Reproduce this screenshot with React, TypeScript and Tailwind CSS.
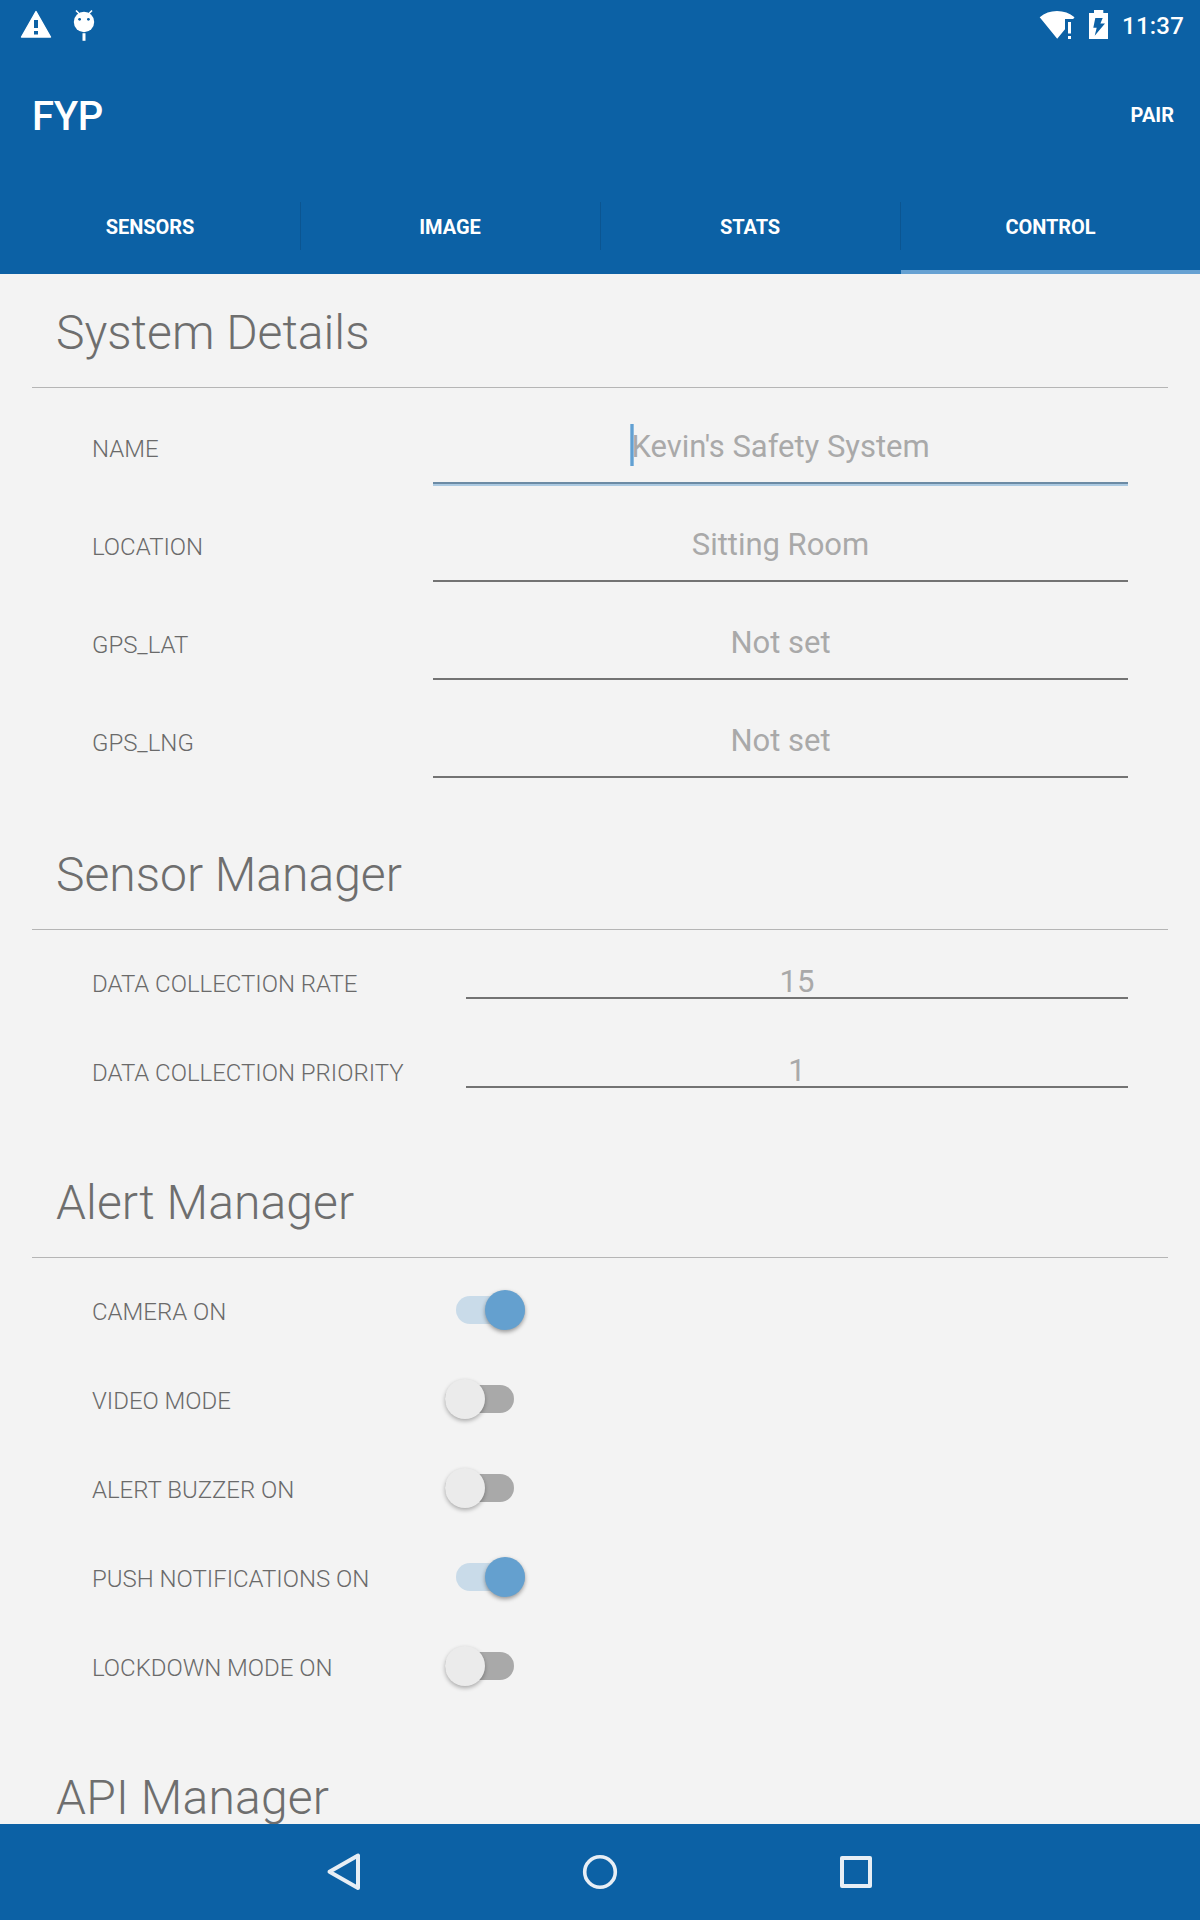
import React from "react";

function Title({ children, box }: { children: string; box: string }) {
  return (
    <div className={`mx-8 border-b border-[#b5b5b5] pl-6 ${box}`}>
      <h2 className="text-[48px] leading-[56px] font-light whitespace-nowrap text-[#6e6e6e]">{children}</h2>
    </div>
  );
}

function Label({ children }: { children: string }) {
  return <span className="block text-[24px] leading-7 font-light tracking-[-0.02px] whitespace-nowrap text-[#6a6a6a]">{children}</span>;
}

function Value({ children }: { children: string }) {
  return <span className="text-[31px] leading-9 tracking-[-0.03px] whitespace-nowrap text-[#a9a9a9]">{children}</span>;
}

function Field({ label, value, active }: { label: string; value: string; active?: boolean }) {
  return (
    <div className="flex h-[98px] items-start pl-[92px]">
      <div className="w-[341px] pt-[47px]"><Label>{label}</Label></div>
      <div className="w-[695px]">
        <div className="flex h-[94px] justify-center pt-[41px]">
          <div className="relative">
            <Value>{value}</Value>
            {active && <i className="absolute -top-[5px] -left-[1px] h-[42px] w-1 border-x border-[#8dbbdf] bg-[#62a0d2]" />}
          </div>
        </div>
        <div className={`h-[2px] ${active ? "bg-[#6b8aa4]" : "bg-[#737373]"}`} />
        {active && <div className="h-[2px] bg-[#abc9e1]" />}
      </div>
    </div>
  );
}

function Sensor({ label, value }: { label: string; value: string }) {
  return (
    <div className="flex h-[89px] items-start pl-[92px]">
      <div className="w-[374px] pt-[40px]"><Label>{label}</Label></div>
      <div className="flex h-[69px] w-[662px] justify-center border-b-2 border-[#737373] pt-[34px]"><Value>{value}</Value></div>
    </div>
  );
}

function Toggle({ label, on }: { label: string; on?: boolean }) {
  return (
    <div className="flex h-[89px] items-start pl-[92px]">
      <div className="w-[352px] pt-[40px]"><Label>{label}</Label></div>
      {on ? (
        <div className="mt-[38px] ml-3 flex h-7 w-[69px] items-center justify-end rounded-full bg-[#c9dbe9]">
          <div className="h-10 w-10 shrink-0 rounded-full bg-[#64a0cf] shadow-[0_2px_4px_rgba(0,0,0,.38)]" />
        </div>
      ) : (
        <div className="mt-[38px] ml-[1px] flex h-7 w-[69px] items-center rounded-full bg-[#a9a9a9]">
          <div className="h-10 w-10 shrink-0 rounded-full bg-[#ebebeb] shadow-[0_2px_4px_rgba(0,0,0,.3)]" />
        </div>
      )}
    </div>
  );
}

function StatusBar() {
  return (
    <div className="flex h-[50px] items-center justify-between pr-4 pl-5">
      <div className="flex gap-5">
        <svg width="32" height="50" viewBox="20 0 32 50" fill="white">
          <path d="M36 11.5 50.5 37H21.5Z" stroke="white" strokeWidth="1.4" strokeLinejoin="round" />
          <path d="M34 20h4v8h-4zm0 11h4v3.5h-4z" fill="#0c61a5" />
        </svg>
        <svg width="24" height="50" viewBox="72 0 24 50">
          <path d="m76 10.5 4 4m12-4-4 4" stroke="white" strokeWidth="1.6" />
          <circle cx="84" cy="22" r="10.2" fill="white" />
          <circle cx="79.6" cy="19.3" r="1.4" fill="#0c61a5" />
          <circle cx="88.4" cy="19.3" r="1.4" fill="#0c61a5" />
          <path d="M82.5 33.2h3v7.6h-3z" fill="white" />
        </svg>
      </div>
      <div className="flex items-center">
        <svg width="36" height="50" viewBox="1039 0 36 50" fill="white">
          <path d="M1039.7 17.3Q1047 11 1057 11t17.5 6.3L1073.2 19h-8.2v10.3l-7.8 9.4Z" />
          <path d="M1068 22h3v11.5h-3zm0 14h3v3h-3z" />
        </svg>
        <svg className="mr-[14px] ml-[14px]" width="19" height="50" viewBox="1089 0 19 50">
          <path d="M1094 10h9.3v3h4.7v26h-19V13h5z" fill="white" />
          <path d="M1095.3 18h7.4l-2.3 5.5h4.6l-10.3 12.2 2-8h-3.4z" fill="#0c61a5" />
        </svg>
        <span className="pt-[2px] text-[24px] font-medium tracking-[0.2px]">11:37</span>
      </div>
    </div>
  );
}

function Tab({ children }: { children: string }) {
  return (
    <div className="flex h-full items-center">
      <span className="flex-1 text-center">{children}</span>
      <i className="-mr-px mb-[2px] h-12 w-px bg-[#0b5591]" />
    </div>
  );
}

export default function App() {
  return (
    <div className="flex h-[1920px] w-[1200px] flex-col overflow-hidden bg-[#f3f3f3] font-['Roboto',sans-serif]">
      <header className="h-[274px] shrink-0 bg-[#0c61a5] text-white">
        <StatusBar />
        <div className="flex h-[130px] items-center justify-between pr-[26px] pl-8">
          <h1 className="pt-1 text-[40px] font-medium tracking-[-0.3px]">FYP</h1>
          <b className="text-[20px]">PAIR</b>
        </div>
        <nav className="grid h-[94px] grid-cols-4 text-[20px] font-bold tracking-[-0.05px]">
          <Tab>SENSORS</Tab>
          <Tab>IMAGE</Tab>
          <Tab>STATS</Tab>
          <div className="ml-px flex flex-col">
            <span className="flex-1 pt-1 text-center leading-[86px]">CONTROL</span>
            <i className="h-1 bg-[#66a1d2]" />
          </div>
        </nav>
      </header>
      <main className="min-h-0 flex-1 overflow-hidden">
        <Title box="h-[114px] pt-[31px]">System Details</Title>
        <Field label="NAME" value="Kevin's Safety System" active />
        <Field label="LOCATION" value="Sitting Room" />
        <Field label="GPS_LAT" value="Not set" />
        <Field label="GPS_LNG" value="Not set" />
        <Title box="h-[150px] pt-[67px]">Sensor Manager</Title>
        <Sensor label="DATA COLLECTION RATE" value="15" />
        <Sensor label="DATA COLLECTION PRIORITY" value="1" />
        <Title box="h-[150px] pt-[67px] tracking-[0.08px]">Alert Manager</Title>
        <Toggle label="CAMERA ON" on />
        <Toggle label="VIDEO MODE" />
        <Toggle label="ALERT BUZZER ON" />
        <Toggle label="PUSH NOTIFICATIONS ON" on />
        <Toggle label="LOCKDOWN MODE ON" />
        <Title box="h-[150px] pt-[67px] tracking-[0.18px]">API Manager</Title>
      </main>
      <footer className="flex h-24 shrink-0 items-center bg-[#0c61a5] pl-[324px]">
        <svg width="552" height="48" viewBox="324 1848 552 48" fill="none" stroke="#e7eef5" strokeWidth="4" strokeLinejoin="round">
          <path d="M358 1855.5v32.5l-28.5-16.2z" />
          <circle cx="600" cy="1872" r="15.3" strokeWidth="3.6" />
          <path d="M842 1858h28v28h-28z" />
        </svg>
      </footer>
    </div>
  );
}
